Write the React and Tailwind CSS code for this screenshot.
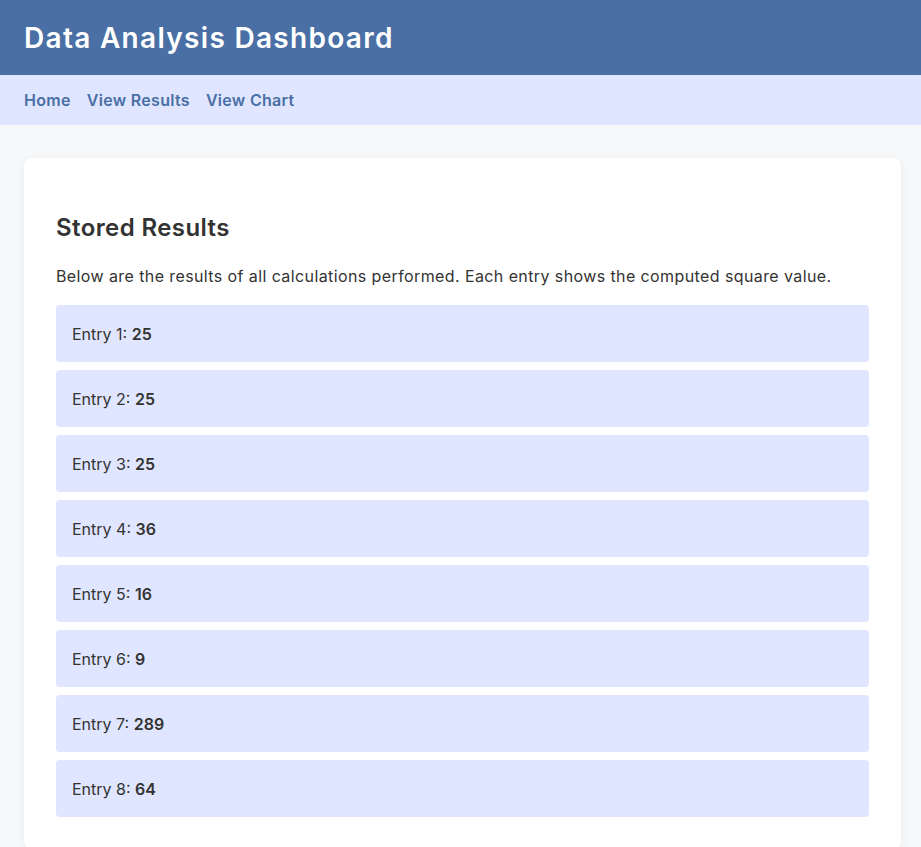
export default function App() {
  const entries = [25, 25, 25, 36, 16, 9, 289, 64];
  return (
    <div className="min-h-screen bg-[#f7f8fa] text-[#333333]" style={{ fontFamily: "Inter, 'Noto Sans', sans-serif" }}>
      <header className="bg-[#4a6fa5] h-[75px] flex items-center px-6">
        <h1 className="text-white text-[28px] font-semibold leading-none tracking-[1.3px]">Data Analysis Dashboard</h1>
      </header>
      <nav className="bg-[#e0e6ff] h-[50px] flex items-center px-6 gap-4">
        <a className="text-[#4a6fa5] font-semibold text-[16px] tracking-[0.3px]">Home</a>
        <a className="text-[#4a6fa5] font-semibold text-[16px] tracking-[0.3px]">View Results</a>
        <a className="text-[#4a6fa5] font-semibold text-[16px] tracking-[0.3px]">View Chart</a>
      </nav>
      <main className="pt-[33px] pl-6 pr-5">
        <section className="bg-white rounded-lg shadow-[0_2px_10px_rgba(0,0,0,0.06)] px-8 pt-[52px] pb-8">
          <h2 className="text-[24px] font-semibold leading-[36px] mb-[18px] tracking-[0.4px]">Stored Results</h2>
          <p className="text-[16px] leading-[24px] mb-[17px] tracking-[0.4px]">Below are the results of all calculations performed. Each entry shows the computed square value.</p>
          <div className="flex flex-col gap-2">
            {entries.map((v, i) => (
              <div key={i} className="bg-[#e0e6ff] rounded px-4 h-[57px] flex items-center text-[16px]">
                <span>Entry {i + 1}:&nbsp;<strong className="font-semibold">{v}</strong></span>
              </div>
            ))}
          </div>
        </section>
      </main>
    </div>
  );
}
